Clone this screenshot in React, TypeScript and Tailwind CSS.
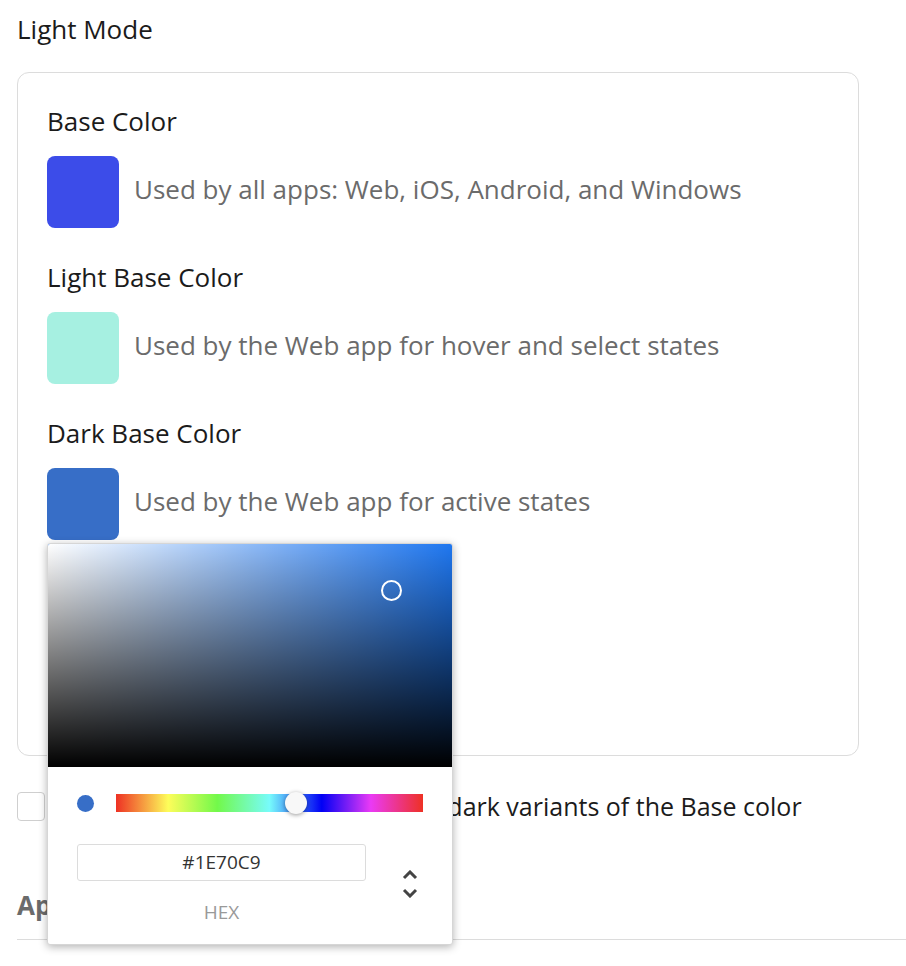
import React from "react";

const swatches = [
  { label: "Base Color", color: "bg-[#3c4ce9]", text: "Used by all apps: Web, iOS, Android, and Windows" },
  { label: "Light Base Color", color: "bg-[#a6f0e1]", text: "Used by the Web app for hover and select states" },
  { label: "Dark Base Color", color: "bg-[#376ec7]", text: "Used by the Web app for active states" },
];

function ColorPicker() {
  return (
    <div className="absolute left-[47px] top-[543px] w-[406px] rounded-[3px] border border-[#d6d6d6] bg-white shadow-[0_2px_8px_rgba(0,0,0,0.3)] overflow-hidden">
      <div className="relative h-[223px] bg-[#1f77f0]">
        <div className="absolute inset-0 bg-gradient-to-r from-white to-transparent" />
        <div className="absolute inset-0 bg-gradient-to-t from-black to-transparent" />
        <div className="absolute left-[333px] top-[36px] h-[21px] w-[21px] rounded-full border-2 border-white" />
      </div>
      <div className="flex items-center pl-[29px] pr-[29px] pt-[27px]">
        <div className="h-[17px] w-[17px] rounded-full bg-[#376ec7]" />
        <div className="relative ml-[22px] h-[18px] flex-1 bg-[linear-gradient(to_right,#ee3124,#fdfd5a_17%,#72f94a_33%,#77fbfb_50%,#0000f5_67%,#ea3af5_83%,#ee3124)]">
          <div className="absolute left-[169px] top-[-2px] h-[22px] w-[22px] rounded-full bg-[#f8f8f8] shadow-[0_1px_4px_rgba(0,0,0,0.4)]" />
        </div>
      </div>
      <div className="flex pl-[29px] pr-[34px] pt-[32px] pb-[22px]">
        <div className="flex w-[289px] flex-col items-center">
          <div className="flex h-[37px] w-full items-center justify-center rounded-[3px] border border-[#dcdcdc] text-[19px] text-[#333]">
            #1E70C9
          </div>
          <div className="mt-[22px] text-[19px] leading-none text-[#999]">HEX</div>
        </div>
        <div className="ml-auto flex flex-col items-center pt-[26px] text-[#444]">
          <svg width="16" height="10" viewBox="0 0 16 10" fill="none" stroke="currentColor" strokeWidth="3">
            <path d="M2 8 L8 2 L14 8" />
          </svg>
          <svg width="16" height="10" viewBox="0 0 16 10" fill="none" stroke="currentColor" strokeWidth="3" className="mt-[8px]">
            <path d="M2 2 L8 8 L14 2" />
          </svg>
        </div>
      </div>
    </div>
  );
}

export default function App() {
  return (
    <div className="relative h-[966px] w-[906px] overflow-hidden bg-white pl-[17px] font-['Open_Sans',sans-serif] text-[#1b1b1b]">
      <div className="pt-[11px] text-[26px] leading-[36px]">Light Mode</div>
      <div className="mt-[25px] h-[684px] w-[842px] rounded-[12px] border border-[#dcdcdc] pl-[29px] pt-[30px]">
        {swatches.map((s, i) => (
          <div key={s.label} className={i > 0 ? "mt-[31px]" : ""}>
            <div className="text-[26px] leading-[36px]">{s.label}</div>
            <div className="mt-[17px] flex items-center">
              <div className={`h-[72px] w-[72px] rounded-[8px] ${s.color}`} />
              <div className="ml-[15px] pb-[6px] text-[26px] text-[#6b6b6b]">{s.text}</div>
            </div>
          </div>
        ))}
      </div>
      <div className="mt-[35px] flex items-center">
        <div className="h-[29px] w-[28px] rounded-[4px] border border-[#cfcfcf]" />
        <div className="ml-[19px] whitespace-nowrap text-[25px] leading-[30px]">Automatically generate light and dark variants of the Base color</div>
      </div>
      <div className="mt-[66px] text-[26px] font-bold leading-[36px] text-[#6b6b6b]">Appearance</div>
      <div className="mt-[16px] h-px w-full bg-[#dcdcdc]" />
      <ColorPicker />
    </div>
  );
}
